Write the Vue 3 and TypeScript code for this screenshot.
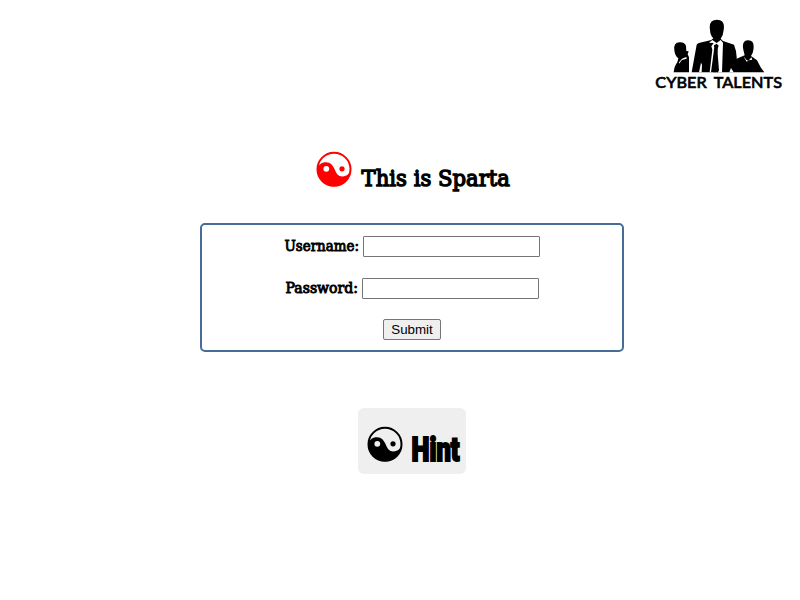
<script setup lang="ts">
import { ref } from 'vue'

interface Field {
  id: string
  label: string
  type: string
  width: number
}

const fields: Field[] = [
  { id: 'username', label: 'Username:', type: 'text', width: 75 },
  { id: 'password', label: 'Password:', type: 'password', width: 73 },
]
const values = ref<Record<string, string>>({ username: '', password: '' })
</script>

<template>
  <div class="page">
    <header class="header">
      <svg class="logo" viewBox="0 0 450 270" aria-label="Cyber Talents">
        <path d="M86 187Q88 168 97 157L100 145Q90 139 88 121Q85 97 104 97Q119 96 123 108L124 123L131 124L128 133L132 142V187Z" />
        <path d="M140 187L155 104Q159 98 174 96L199 90L205 85Q196 77 195 60Q190 29 216 29Q241 29 236 60Q235 76 227 86L234 93L267 104Q276 126 275 146L299 136L295 119Q289 91 310 91Q330 91 325 120Q324 130 318 138L336 151L347 172L358 187Z" />
        <path class="cut" d="M194 187L202 119L199 109L206 99L192 98L202 90L215 99L227 90L234 98L231 187H211L218 119L214 104L207 119L198 187Z" />
        <path d="M207 106L215 101L221 107L217 119L222 181L219 187H204L208 120Z" />
        <path class="cut" d="M162 187L168 158L171 164L170 187ZM253 187L258 174L266 187ZM102 157L111 146L124 141L125 146L111 150L102 161ZM295 139L304 149L310 153L319 142L322 149L312 151L305 155Z" />
        <text x="31" y="233" textLength="380" lengthAdjust="spacingAndGlyphs">CYBER TALENTS</text>
      </svg>
    </header>

    <main class="content">
      <h1 class="title">
        <svg class="yin red" viewBox="0 0 36 36" aria-hidden="true">
          <circle class="ring" cx="18" cy="18.3" r="16.5" />
          <path d="M1 18.3C2 14 5.5 11.3 10 11.3C14.5 11.3 17 14.5 18.7 18.5C20.5 22.5 22 25.5 26.5 25.5C31 25.5 34 22 35 18.3A17 17 0 0 1 1 18.3Z" />
          <circle class="eye" cx="10.3" cy="17.8" r="2.9" />
          <circle cx="26" cy="17.8" r="2.6" />
        </svg>
        <svg class="title-text" viewBox="0 0 150 36">
          <text x="1.5" y="27" textLength="148.5" lengthAdjust="spacingAndGlyphs">This is Sparta</text>
        </svg>
      </h1>

      <form class="login" @submit.prevent>
        <div v-for="field in fields" :key="field.id" class="row">
          <label :for="field.id">
            <svg class="label-text" :style="{ width: field.width + 'px' }" height="21">
              <text x="0.5" y="15" :textLength="field.width - 0.5" lengthAdjust="spacingAndGlyphs">{{ field.label }}</text>
            </svg>
          </label>
          <input :id="field.id" v-model="values[field.id]" :type="field.type" />
        </div>
        <button class="submit" type="submit">Submit</button>
      </form>

      <button class="hint" type="button">
        <svg class="yin" viewBox="0 0 36 36" aria-hidden="true">
          <circle class="ring" cx="18" cy="18.3" r="16.5" />
          <path d="M1 18.3C2 14 5.5 11.3 10 11.3C14.5 11.3 17 14.5 18.7 18.5C20.5 22.5 22 25.5 26.5 25.5C31 25.5 34 22 35 18.3A17 17 0 0 1 1 18.3Z" />
          <circle class="eye" cx="10.3" cy="17.8" r="2.9" />
          <circle cx="26" cy="17.8" r="2.6" />
        </svg>
        <svg class="hint-text" viewBox="0 0 50 36">
          <text x="0.5" y="30" textLength="48" lengthAdjust="spacingAndGlyphs">Hint</text>
        </svg>
      </button>
    </main>
  </div>
</template>

<style>
body {
  background: #fff;
}
</style>

<style scoped>
.page {
  box-sizing: border-box;
  height: 600px;
  padding-top: 10px;
  overflow: hidden;
  color: #000;
}
.header {
  display: flex;
  justify-content: flex-end;
  padding-right: 5px;
}
.logo {
  display: block;
  width: 150px;
  height: 90px;
}
.logo .cut {
  fill: #fff;
}
.logo text {
  font: 500 48px Lato, sans-serif;
  word-spacing: 10px;
  stroke: #000;
  stroke-width: 1.8px;
}
.content {
  display: flex;
  flex-direction: column;
  align-items: center;
  width: 424px;
  margin: 51px 0 0 200px;
}
.title {
  display: flex;
  align-items: flex-start;
  gap: 8px;
  margin: 0 0 35px;
  padding-left: 2px;
  height: 37px;
}
.yin {
  flex: none;
  width: 36px;
  height: 36px;
}
.ring {
  fill: #fff;
  stroke: #000;
  stroke-width: 2px;
}
.eye {
  fill: #fff;
}
.yin.red {
  fill: #f00;
}
.red .ring {
  stroke: #f00;
}
.title-text {
  width: 150px;
  height: 36px;
  margin-top: 8px;
  overflow: visible;
}
.title-text text {
  font: 400 23px "DejaVu Serif", serif;
  stroke: #000;
  stroke-width: 1.4px;
}
.login {
  box-sizing: border-box;
  display: flex;
  flex-direction: column;
  align-items: center;
  width: 424px;
  height: 129px;
  padding: 11px 0 0;
  border: 2px solid #466d96;
  border-radius: 5px;
}
.row {
  display: flex;
  gap: 4px;
  height: 21px;
  margin-bottom: 21px;
}
.label-text {
  display: block;
  overflow: visible;
}
.label-text text {
  font: 400 15px "DejaVu Serif", serif;
  stroke: #000;
  stroke-width: 0.95px;
}
input {
  box-sizing: border-box;
  width: 177px;
  height: 21px;
  margin: 0;
  padding: 1px 2px;
  border: 1px solid #767676;
  border-radius: 1px;
  background: #fff;
}
.submit {
  box-sizing: border-box;
  width: 58px;
  height: 21px;
  margin-top: -1px;
  padding: 0;
  border: 1px solid #767676;
  border-radius: 2px;
  background: #efefef;
  color: #000;
  font: 13.333px/19px "Liberation Sans", Arial, sans-serif;
}
.hint {
  box-sizing: border-box;
  display: flex;
  align-items: flex-start;
  gap: 8px;
  width: 108px;
  height: 66px;
  margin-top: 56px;
  padding: 18px 0 0 8.5px;
  border: 0;
  border-radius: 6px;
  background: #efefef;
}
.hint .ring,
.hint .eye {
  fill: #efefef;
}
.hint-text {
  width: 50px;
  height: 36px;
  margin-top: 5px;
  overflow: visible;
}
.hint-text text {
  font: 900 33px Roboto, "Liberation Sans", sans-serif;
  stroke: #000;
  stroke-width: 2px;
}
</style>
